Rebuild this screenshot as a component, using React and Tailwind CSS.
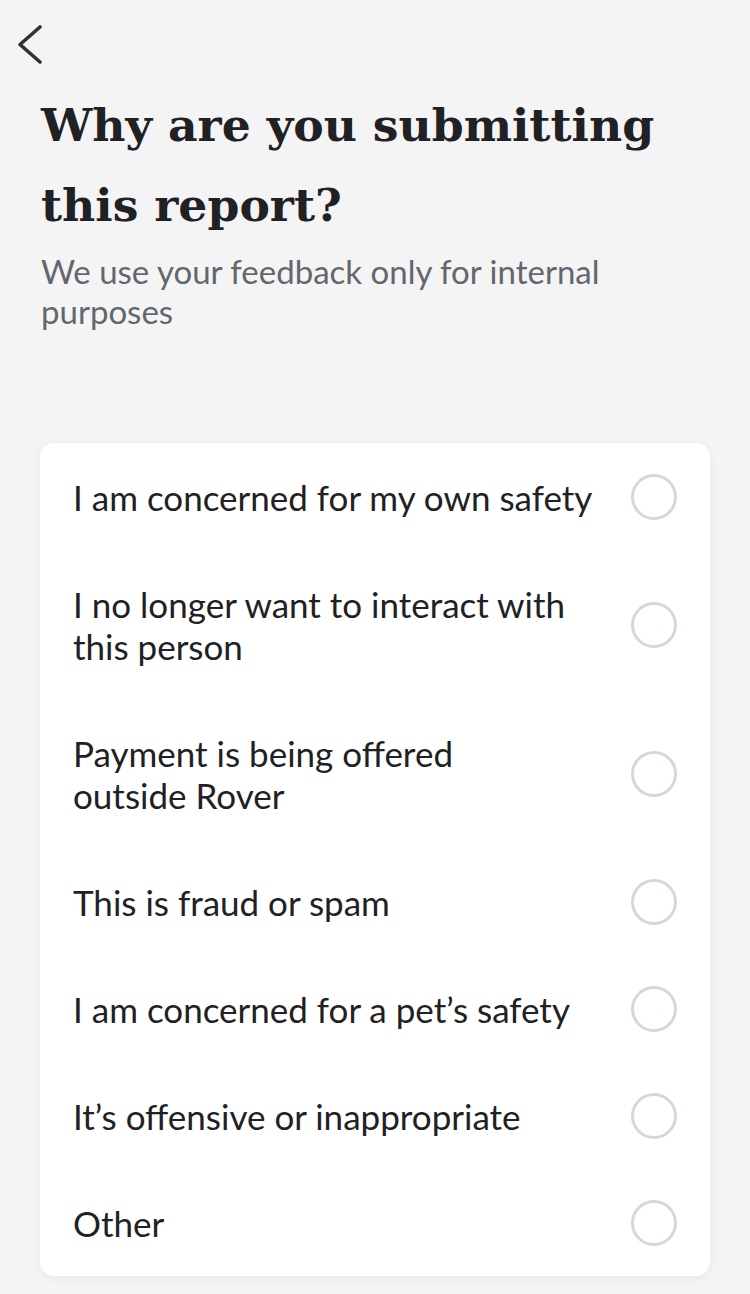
const reasons = [
  ['I am concerned for my own safety'],
  ['I no longer want to interact with', 'this person'],
  ['Payment is being offered', 'outside Rover'],
  ['This is fraud or spam'],
  ['I am concerned for a pet\u2019s safety'],
  ['It\u2019s offensive or inappropriate'],
  ['Other'],
];

function BackIcon() {
  return (
    <svg width="30" height="44" viewBox="0 0 30 44" fill="none" className="text-[#2f3337]">
      <polyline points="24,4 4,21.5 24,39" stroke="currentColor" strokeWidth="3.6" strokeLinecap="round" strokeLinejoin="round" />
    </svg>
  );
}

export default function App() {
  return (
    <div className="min-h-[1294px] w-[750px] bg-[#f4f4f5] text-[#1f2124] font-['Lato',sans-serif]">
      {/* Header */}
      <div className="pt-[23px] pl-[16px]">
        <BackIcon />
      </div>

      <div className="px-[41px]">
        <h1 className="mt-[18px] font-['DejaVu_Serif',serif] font-bold text-[45.7px] leading-[80px]">
          Why are you submitting<br />this report?
        </h1>
        <p className="mt-[6px] text-[33px] leading-[40px] text-[#62676d]">
          We use your feedback only for internal<br />purposes
        </p>
      </div>

      {/* Reasons */}
      <div className="mx-[40px] mt-[112px] bg-white rounded-[14px] shadow-[0_2px_8px_rgba(0,0,0,0.06)]">
        {reasons.map((lines, i) => (
          <label key={i} className="flex items-center justify-between pl-[33px] pr-[33px] cursor-pointer">
            <span className="py-[32.5px] text-[35px] leading-[42px]">
              {lines.map((l, j) => (
                <span key={j} className="block">{l}</span>
              ))}
            </span>
            <span className="w-[46px] h-[46px] shrink-0 rounded-full border-[3px] border-[#d3d8de]" />
          </label>
        ))}
      </div>
    </div>
  );
}
